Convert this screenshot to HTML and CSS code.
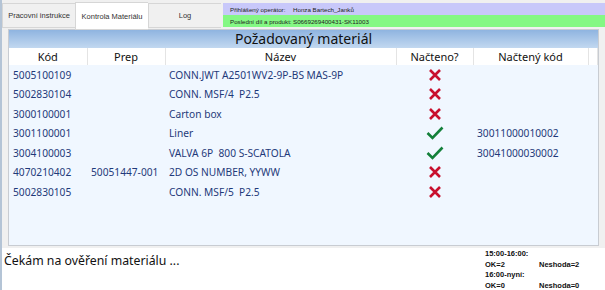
FILE: index.html
```html
<!DOCTYPE html>
<html lang="cs">
<head>
  <meta charset="UTF-8">
  <title>Kontrola Materiálu</title>
  <link rel="stylesheet" href="styles.css">
</head>
<body>
  <div class="top">
    <div class="tab">Pracovní instrukce</div>
    <div class="tab active">Kontrola Materiálu</div>
    <div class="tab">Log</div>
    <div class="info">
      <div class="info-row operator"><span class="lbl">Přihlášený operátor:</span><span>Honza Bartech_Janků</span></div>
      <div class="info-row product"><span class="lbl">Poslední díl a produkt:</span><span>S0669269400431-SK11003</span></div>
    </div>
  </div>

  <div class="main">
    <div class="panel">
      <div class="panel-title">Požadovaný materiál</div>
      <table>
        <colgroup>
          <col class="c-kod"><col class="c-prep"><col class="c-nazev"><col class="c-ok"><col class="c-nk"><col>
        </colgroup>
        <thead>
          <tr><th>Kód</th><th>Prep</th><th>Název</th><th>Načteno?</th><th>Načtený kód</th><th></th></tr>
        </thead>
        <tbody id="rows"></tbody>
      </table>
    </div>
  </div>

  <div class="status">
    <div class="msg">Čekám na ověření materiálu ...</div>
    <div class="stats">
      <span>15:00-16:00:</span><span></span>
      <span>OK=2</span><span>Neshoda=2</span>
      <span>16:00-nyní:</span><span></span>
      <span>OK=0</span><span>Neshoda=0</span>
    </div>
  </div>

  <script>
    const polozky = [
      ["5005100109", "", "CONN.JWT A2501WV2-9P-BS MAS-9P", false, ""],
      ["5002830104", "", "CONN. MSF/4  P2.5", false, ""],
      ["3000100001", "", "Carton box", false, ""],
      ["3001100001", "", "Liner", true, "30011000010002"],
      ["3004100003", "", "VALVA 6P  800 S-SCATOLA", true, "30041000030002"],
      ["4070210402", "50051447-001", "2D OS NUMBER, YYWW", false, ""],
      ["5002830105", "", "CONN. MSF/5  P2.5", false, ""]
    ];

    const krizek = '<svg class="ico" width="14" height="14" viewBox="0 0 14 14"><path d="M2 2L12 12M12 2L2 12" stroke="#c8102e" stroke-width="2.6" fill="none"/></svg>';
    const fajfka = '<svg class="ico" width="18" height="14" viewBox="0 0 18 14"><path d="M1.5 7L6.5 12L16.5 1.5" stroke="#14803a" stroke-width="2.6" fill="none"/></svg>';

    const tbody = document.getElementById("rows");
    polozky.forEach(p => {
      const tr = document.createElement("tr");
      tr.innerHTML = `
        <td>${p[0]}</td>
        <td>${p[1]}</td>
        <td>${p[2]}</td>
        <td class="center">${p[3] ? fajfka : krizek}</td>
        <td>${p[4]}</td>
        <td></td>
      `;
      tbody.appendChild(tr);
    });
  </script>
</body>
</html>
```

FILE: styles.css
```css
body {
  margin: 0;
  width: 605px;
  height: 290px;
  overflow: hidden;
  background: #f0f0f0;
  font-family: 'Noto Sans', 'Open Sans', sans-serif;
  border-left: 2px solid #b4c4d6;
  box-sizing: border-box;
}

.top {
  display: flex;
  height: 28px;
  padding-top: 2px;
  box-sizing: border-box;
}

.tab {
  width: 72px;
  height: 23px;
  margin-top: 1px;
  border: 1px solid #d6d6d6;
  border-right: none;
  background: #f0f0f0;
  font-family: 'Liberation Sans', sans-serif;
  font-size: 7.5px;
  color: #333;
  display: flex;
  align-items: center;
  justify-content: center;
}

.tab.active {
  background: #fff;
  height: 26px;
  margin-top: 0;
}

.info {
  flex: 1;
  margin-left: 2px;
  margin-top: 1px;
  height: 24px;
  font-family: 'Liberation Sans', sans-serif;
  font-size: 6.2px;
  color: #222;
}

.info-row {
  height: 12px;
  display: flex;
  align-items: center;
  padding-left: 7px;
  white-space: nowrap;
}

.info-row .lbl {
  width: 63px;
  flex-shrink: 0;
}

.operator {
  background: #c8c8fa;
}

.product {
  background: #84f884;
}

.main {
  padding: 1px 6px 2px 6px;
}

.panel {
  border: 1px solid #c8ccd2;
  background: #f0f7ff;
  height: 215px;
}

.panel-title {
  height: 18px;
  background: linear-gradient(#8fb4e0, #c2d8f0);
  text-align: center;
  font-size: 14px;
  line-height: 18px;
  color: #111;
}

table {
  width: 100%;
  border-collapse: collapse;
  table-layout: fixed;
}

.c-kod { width: 78px; }
.c-prep { width: 78px; }
.c-nazev { width: 231px; }
.c-ok { width: 77px; }
.c-nk { width: 115px; }

th {
  background: #fff;
  font-weight: normal;
  font-size: 11px;
  color: #111;
  height: 17px;
  padding: 0;
  border-right: 1px solid #e4e4e4;
}

td {
  height: 19.5px;
  padding: 0 0 0 4px;
  font-size: 10.2px;
  color: #1f3a7a;
  white-space: pre;
}

td.center {
  text-align: center;
  padding: 0;
}

.ico {
  display: block;
  margin: 0 auto;
}

.status {
  background: #fff;
  height: 43px;
  border-bottom: 2px solid #7eaedb;
  display: flex;
  justify-content: space-between;
}

.msg {
  font-size: 12.3px;
  color: #111;
  padding: 4px 0 0 2px;
}

.stats {
  display: grid;
  grid-template-columns: 54px 58px;
  margin-right: 8px;
  padding-top: 1px;
  font-family: 'Liberation Sans', sans-serif;
  font-size: 7.5px;
  font-weight: bold;
  line-height: 10px;
  color: #111;
}
```
